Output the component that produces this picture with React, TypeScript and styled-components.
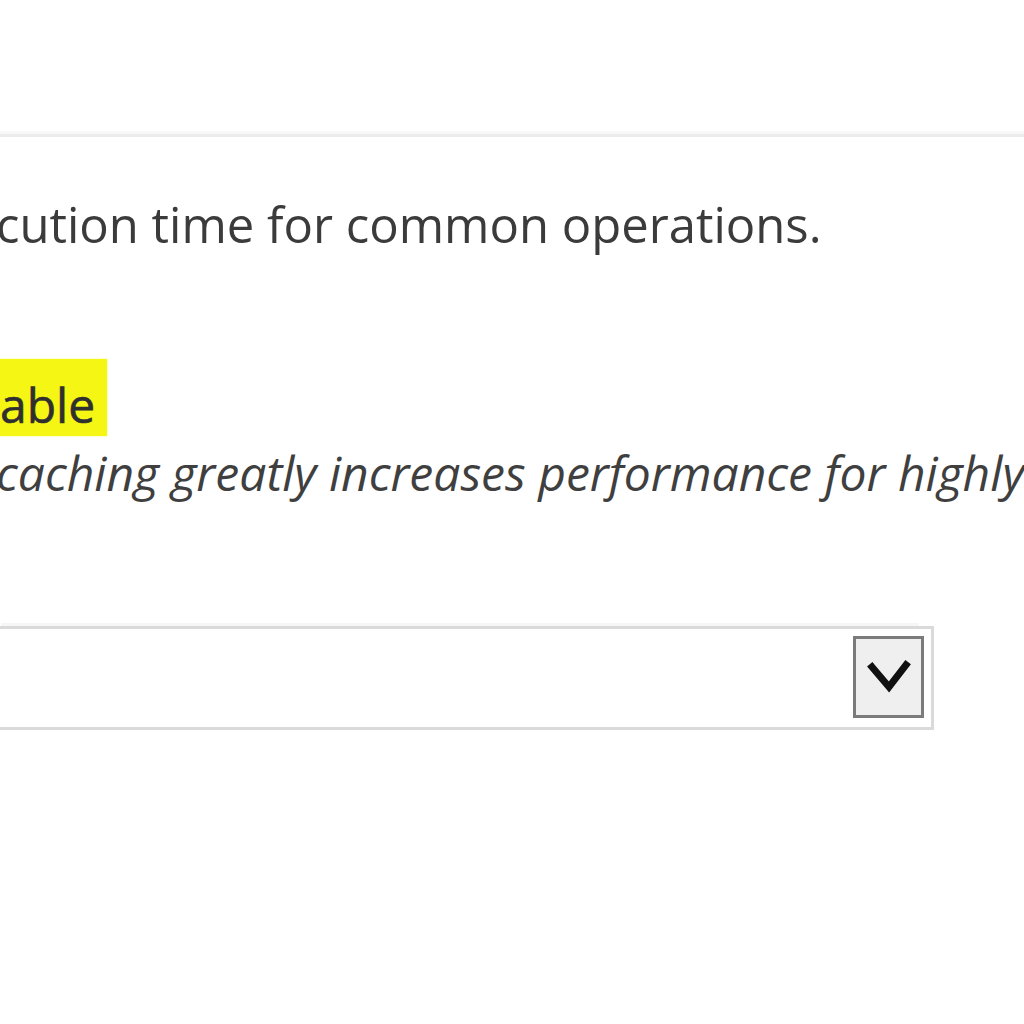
import styled, { createGlobalStyle } from "styled-components";

const GlobalStyle = createGlobalStyle`
  html, body {
    margin: 0;
    padding: 0;
    background: #ffffff;
    overflow: hidden;
  }
  body {
    font-family: "Open Sans", "Liberation Sans", sans-serif;
    color: #3b3b3b;
  }
`;

const Page = styled.div`
  width: 1024px;
  height: 1024px;
  overflow: hidden;
  display: flex;
  flex-direction: column;
`;

const TopBar = styled.div`
  height: 134px;
  border-bottom: 3px solid #ececec;
  box-shadow: 0 -6px 0 -3px #f8f8f8 inset;
  flex-shrink: 0;
`;

const Body = styled.div`
  display: flex;
  flex-direction: column;
  margin-left: -4px;
`;

const Description = styled.p`
  margin: 54px 0 0;
  font-size: 49px;
  line-height: 67px;
  white-space: nowrap;
`;

const Field = styled.div`
  margin-top: 101px;
  display: flex;
  flex-direction: column;
`;

const LabelRow = styled.div`
  display: flex;
`;

const Highlight = styled.span`
  display: inline-block;
  height: 77px;
  box-sizing: border-box;
  padding: 14px 12px 0 4px;
  line-height: 63px;
  font-size: 48px;
  background: #f6f614;
  color: #2f2f2f;
  box-shadow: 0 0 2px #f7f780;
  -webkit-text-stroke: 0.6px #2f2f2f;
`;

const Help = styled.div`
  margin-top: 3px;
  font-size: 48px;
  font-style: italic;
  line-height: 67px;
  white-space: nowrap;
  color: #3f3f3f;
`;

const Select = styled.div`
  margin: 120px 0 0 -10px;
  width: 948px;
  height: 104px;
  box-sizing: border-box;
  border: 3px solid #dadada;
  box-shadow: 0 -18px 0 -15px #f6f6f6;
  display: flex;
  justify-content: flex-end;
  align-items: flex-start;
  padding: 7px 7px 0 0;
`;

const DropButton = styled.div`
  width: 71px;
  height: 82px;
  box-sizing: border-box;
  border: 3px solid #7b7b7b;
  background: #efefef;
  display: flex;
  align-items: center;
  justify-content: center;
`;

export default function App() {
  return (
    <>
      <GlobalStyle />
      <Page>
        <TopBar />
        <Body>
          <Description>cution time for common operations.</Description>
          <Field>
            <LabelRow>
              <Highlight>able</Highlight>
            </LabelRow>
            <Help>caching greatly increases performance for highly</Help>
          </Field>
          <Select>
            <DropButton>
              <svg width="44" height="34" viewBox="0 0 44 34">
                <path
                  d="M5 7 L22 27 L39 5"
                  fill="none"
                  stroke="#111"
                  strokeWidth="7"
                  strokeLinecap="square"
                />
              </svg>
            </DropButton>
          </Select>
        </Body>
      </Page>
    </>
  );
}
